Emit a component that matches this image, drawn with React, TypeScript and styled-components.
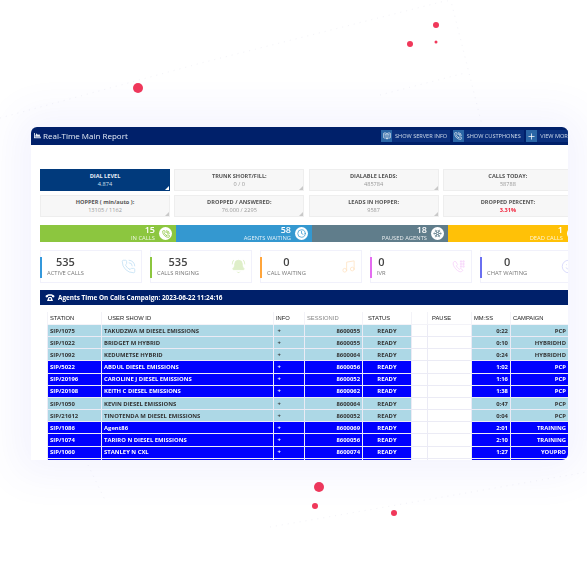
import styled, { createGlobalStyle } from "styled-components";
import { BookOpenText, Clock, Music, PhoneCall, Plus, PhoneOff, Smile, Snowflake, BellRing } from "lucide-react";
import { FaChartArea } from "react-icons/fa";
import { ReactNode } from "react";

const Global = createGlobalStyle`
  html, body { margin: 0; background: #fff; }
  body { font-family: "Open Sans", "Liberation Sans", sans-serif; }
`;

const Page = styled.div`
  position: relative;
  width: 587px;
  height: 565px;
  box-sizing: border-box;
  padding: 127px 19px 0 31px;
  overflow: hidden;
  background: #fff;
`;

const Backdrop = styled.svg`
  position: absolute;
  left: 0;
  top: 0;
`;

const Card = styled.div`
  position: relative;
  height: 333px;
  background: #fff;
  border-radius: 6px 6px 6px 0;
  overflow: hidden;
  box-shadow: 0 0 40px 14px rgba(90, 90, 235, 0.07);
  filter: blur(0.3px);
`;

const Header = styled.div`
  height: 18px;
  box-sizing: border-box;
  background: #00206a;
  color: #e4ecf6;
  display: flex;
  align-items: center;
  padding: 0 0 1px 3px;
  font-size: 8px;
  gap: 2px;
`;

const HeaderLogo = styled(FaChartArea)`
  flex-shrink: 0;
`;

const HeaderTitle = styled.div`
  width: 336px;
  white-space: nowrap;
  flex-shrink: 0;
`;

const HeaderActions = styled.div`
  display: flex;
  gap: 2.5px;
  flex-shrink: 0;
  margin-top: 1px;
`;

const HeadBtn = styled.div`
  height: 12px;
  display: flex;
  align-items: center;
  gap: 3px;
  padding-right: 3px;
  background: #0a2f7c;
  color: #cfdbea;
  font-size: 5.6px;
  white-space: nowrap;
`;

const HeadIcon = styled.span`
  width: 11px;
  height: 12px;
  background: #2b66a6;
  color: #fff;
  display: flex;
  align-items: center;
  justify-content: center;
`;

const Body = styled.div`
  width: 560px;
  padding: 24px 0 0 9px;
`;

const StatGrid = styled.div`
  display: grid;
  grid-template-columns: repeat(4, 130px);
  column-gap: 4.3px;
  row-gap: 4px;
`;

const Stat = styled.div<{ $active?: boolean }>`
  position: relative;
  height: 22px;
  box-sizing: border-box;
  border: 1px solid ${(p) => (p.$active ? "#013a7c" : "#eeeeee")};
  background: ${(p) => (p.$active ? "#013a7c" : "#f7f7f7")};
  display: flex;
  flex-direction: column;
  align-items: center;
  justify-content: center;
  text-align: center;
  &::after {
    content: "";
    position: absolute;
    right: 0;
    bottom: 0;
    border-style: solid;
    border-width: 0 0 4px 4px;
    border-color: transparent transparent ${(p) => (p.$active ? "#fff" : "#c9c9c9")} transparent;
  }
`;

const StatLabel = styled.div<{ $active?: boolean }>`
  font-size: 5.6px;
  line-height: 8px;
  font-weight: 700;
  color: ${(p) => (p.$active ? "#e8eef6" : "#555")};
`;

const StatValue = styled.div<{ $active?: boolean; $alert?: boolean }>`
  font-size: 5.6px;
  line-height: 8px;
  font-weight: ${(p) => (p.$alert ? 700 : 400)};
  color: ${(p) => (p.$active ? "#d5e0ee" : p.$alert ? "#f2243c" : "#999")};
`;

const Bars = styled.div`
  display: flex;
  margin-top: 8px;
  height: 17px;
`;

const Bar = styled.div<{ $bg: string; $width: number }>`
  width: ${(p) => p.$width}px;
  flex-shrink: 0;
  background: ${(p) => p.$bg};
  color: #fff;
  display: flex;
  align-items: center;
  justify-content: flex-end;
  gap: 4px;
  padding-right: 4px;
  box-sizing: border-box;
`;

const BarText = styled.div`
  text-align: right;
`;

const BarNum = styled.div`
  font-size: 9px;
  line-height: 10px;
  font-weight: 600;
`;

const BarLabel = styled.div`
  font-size: 5.8px;
  line-height: 7px;
  opacity: 0.85;
`;

const BarIcon = styled.span<{ $color: string }>`
  width: 13px;
  height: 13px;
  border-radius: 50%;
  background: #fff;
  color: ${(p) => p.$color};
  display: flex;
  align-items: center;
  justify-content: center;
  flex-shrink: 0;
`;

const Tiles = styled.div`
  display: flex;
  gap: 8px;
  margin-top: 8px;
`;

const Tile = styled.div`
  position: relative;
  width: 102px;
  height: 33px;
  box-sizing: border-box;
  flex-shrink: 0;
  border: 1px solid #f1f1fb;
  display: flex;
  align-items: center;
  justify-content: space-between;
  padding: 0 5px 0 6px;
`;

const Accent = styled.span<{ $color: string }>`
  position: absolute;
  left: -1px;
  top: 6px;
  width: 2px;
  height: 21px;
  background: ${(p) => p.$color};
`;

const TileText = styled.div`
  text-align: center;
`;

const TileNum = styled.div`
  font-size: 11px;
  line-height: 14px;
  font-weight: 600;
  color: #444;
`;

const TileLabel = styled.div`
  font-size: 5.8px;
  line-height: 9px;
  color: #777;
  white-space: nowrap;
`;

const TileIcon = styled.span<{ $color: string }>`
  color: ${(p) => p.$color};
  display: flex;
  opacity: 0.28;
`;

const TitleBar = styled.div`
  margin-top: 7px;
  height: 15px;
  background: #00206a;
  color: #fff;
  display: flex;
  align-items: center;
  gap: 3px;
  padding-left: 5px;
  font-size: 6.4px;
  font-weight: 700;
  white-space: nowrap;
`;

const TableWrap = styled.div`
  margin: 7px 0 0 7px;
`;

const Table = styled.table`
  width: 521px;
  table-layout: fixed;
  border-collapse: collapse;
`;

const Th = styled.th<{ $muted?: boolean; $pad?: number }>`
  height: 12px;
  padding: 0 0 0 ${(p) => p.$pad ?? 2}px;
  border: 1px solid #f3f3f8;
  border-top: 0;
  font-family: "Liberation Sans", Arial, sans-serif;
  font-size: 5.8px;
  font-weight: 400;
  text-align: left;
  color: ${(p) => (p.$muted ? "#888" : "#222")};
  white-space: nowrap;
`;

const Tr = styled.tr<{ $hot?: boolean }>`
  height: 12.17px;
  background: ${(p) => (p.$hot ? "#0000ff" : "#add8e6")};
  color: ${(p) => (p.$hot ? "#fff" : "#333")};
`;

const Td = styled.td<{ $align?: string; $blank?: boolean }>`
  padding: 0 2px;
  border: 1px solid #ebebf5;
  font-size: 5.9px;
  line-height: 10px;
  font-weight: 700;
  white-space: nowrap;
  overflow: hidden;
  text-align: ${(p) => p.$align ?? "left"};
  background: ${(p) => (p.$blank ? "#fff" : "transparent")};
`;

const DialPhone = () => (
  <svg width="15" height="15" viewBox="0 0 24 24" fill="none" stroke="currentColor" strokeWidth="1.4">
    <path d="M5 4c-1.500 1-2 3-1 6 1.500 4 5 8 9 10 3 1 5 0 6-2l-3.500-3-2 1.500c-2-1-4-3.500-5-5.500l2-2L7.500 4z" />
    <path d="M15 3h2v2h-2zM19 3h2v2h-2zM15 7h2v2h-2zM19 7h2v2h-2zM15 11h2v2h-2zM19 11h2v2h-2z" />
  </svg>
);

const DeskPhone = () => (
  <svg width="10" height="9" viewBox="0 0 20 18" fill="#fff">
    <path d="M1 6C4 1 16 1 19 6l-1 3-4-1V6C12 5 8 5 6 6v2L2 9z" />
    <path d="M7 8h6l3 8H4z" />
    <circle cx="10" cy="12" r="1.800" fill="#00206a" />
  </svg>
);

const stats = [
  { label: "DIAL LEVEL", value: "4.874", active: true },
  { label: "TRUNK SHORT/FILL:", value: "0 / 0" },
  { label: "DIALABLE LEADS:", value: "485784" },
  { label: "CALLS TODAY:", value: "58788" },
  { label: "HOPPER ( min/auto ):", value: "13105 / 1162" },
  { label: "DROPPED / ANSWERED:", value: "76.000 / 2295" },
  { label: "LEADS IN HOPPER:", value: "9587" },
  { label: "DROPPED PERCENT:", value: "3.31%", alert: true },
];

const bars: { num: string; label: string; bg: string; width: number; icon: ReactNode; color: string }[] = [
  { num: "15", label: "IN CALLS", bg: "#8cc63f", width: 136, color: "#8cc63f", icon: <PhoneCall size={8} strokeWidth={2.4} /> },
  { num: "58", label: "AGENTS WAITING", bg: "#3498d0", width: 136, color: "#3498d0", icon: <Clock size={9} strokeWidth={2} /> },
  { num: "18", label: "PAUSED AGENTS", bg: "#607d8b", width: 136, color: "#607d8b", icon: <Snowflake size={9} strokeWidth={2} /> },
  { num: "1", label: "DEAD CALLS", bg: "#ffc107", width: 136, color: "#ffc107", icon: <PhoneOff size={8} strokeWidth={2} /> },
];

const tiles: { num: string; label: string; color: string; icon: ReactNode }[] = [
  { num: "535", label: "ACTIVE CALLS", color: "#3498db", icon: <PhoneCall size={15} strokeWidth={1.4} /> },
  { num: "535", label: "CALLS RINGING", color: "#8cc63f", icon: <BellRing size={15} strokeWidth={1.4} fill="currentColor" /> },
  { num: "0", label: "CALL WAITING", color: "#ffa53b", icon: <Music size={15} strokeWidth={1.4} /> },
  { num: "0", label: "IVR", color: "#e46cf0", icon: <DialPhone /> },
  { num: "0", label: "CHAT WAITING", color: "#6a6ff0", icon: <Smile size={15} strokeWidth={1.4} /> },
];

const rows = [
  ["SIP/1075", "TAKUDZWA M DIESEL EMISSIONS", "8600055", "0:22", "PCP", false],
  ["SIP/1022", "BRIDGET M HYBRID", "8600055", "0:10", "HYBRIDHD", false],
  ["SIP/1092", "KEDUMETSE HYBRID", "8600064", "0:24", "HYBRIDHD", false],
  ["SIP/5022", "ABDUL DIESEL EMISSIONS", "8600056", "1:02", "PCP", true],
  ["SIP/20196", "CAROLINE J DIESEL EMISSIONS", "8600052", "1:16", "PCP", true],
  ["SIP/20108", "KEITH C DIESEL EMISSIONS", "8600062", "1:38", "PCP", true],
  ["SIP/1050", "KEVIN DIESEL EMISSIONS", "8600064", "0:47", "PCP", false],
  ["SIP/21612", "TINOTENDA M DIESEL EMISSIONS", "8600052", "0:04", "PCP", false],
  ["SIP/1086", "Agent86", "8600069", "2:01", "TRAINING", true],
  ["SIP/1074", "TARIRO N DIESEL EMISSIONS", "8600056", "2:10", "TRAINING", true],
  ["SIP/1060", "STANLEY N CXL", "8600074", "1:27", "YOUPRO", true],
] as const;

const columns = [54, 172, 31, 58, 49, 16, 44, 39, 58];

function App() {
  return (
    <>
      <Global />
      <Page>
        <Backdrop width="587" height="565" viewBox="0 0 587 565" fill="none">
          <g stroke="#f3f3f8" strokeWidth="1" strokeDasharray="1 5">
            <path d="M0 118L205 62L445 1Q450 0 452 5L482 125" />
            <path d="M380 95L465 73" />
            <path d="M270 527L587 472" />
            <path d="M88 465L105 500" />
          </g>
          <circle cx="138" cy="88" r="5" fill="#f0385a" />
          <circle cx="436" cy="25" r="3" fill="#f0385a" />
          <circle cx="410" cy="44" r="3" fill="#f0385a" />
          <circle cx="436" cy="42" r="1.500" fill="#f0385a" />
          <circle cx="319" cy="487" r="5" fill="#f0385a" />
          <circle cx="315" cy="506" r="3" fill="#f0385a" />
          <circle cx="394" cy="513" r="3" fill="#f0385a" />
        </Backdrop>
        <Card>
          <Header>
            <HeaderLogo size={7} />
            <HeaderTitle>Real-Time Main Report</HeaderTitle>
            <HeaderActions>
              <HeadBtn><HeadIcon><BookOpenText size={8} /></HeadIcon>SHOW SERVER INFO</HeadBtn>
              <HeadBtn><HeadIcon><PhoneCall size={8} /></HeadIcon>SHOW CUSTPHONES</HeadBtn>
              <HeadBtn><HeadIcon><Plus size={9} /></HeadIcon>VIEW MORE</HeadBtn>
            </HeaderActions>
          </Header>
          <Body>
            <StatGrid>
              {stats.map((s) => (
                <Stat key={s.label} $active={s.active}>
                  <StatLabel $active={s.active}>{s.label}</StatLabel>
                  <StatValue $active={s.active} $alert={s.alert}>{s.value}</StatValue>
                </Stat>
              ))}
            </StatGrid>
            <Bars>
              {bars.map((b) => (
                <Bar key={b.label} $bg={b.bg} $width={b.width}>
                  <BarText>
                    <BarNum>{b.num}</BarNum>
                    <BarLabel>{b.label}</BarLabel>
                  </BarText>
                  <BarIcon $color={b.color}>{b.icon}</BarIcon>
                </Bar>
              ))}
            </Bars>
            <Tiles>
              {tiles.map((t) => (
                <Tile key={t.label}>
                  <Accent $color={t.color} />
                  <TileText>
                    <TileNum>{t.num}</TileNum>
                    <TileLabel>{t.label}</TileLabel>
                  </TileText>
                  <TileIcon $color={t.color}>{t.icon}</TileIcon>
                </Tile>
              ))}
            </Tiles>
            <TitleBar>
              <DeskPhone />
              Agents Time On Calls Campaign: 2023-06-22 11:24:16
            </TitleBar>
            <TableWrap>
              <Table>
                <colgroup>
                  {columns.map((w, i) => (
                    <col key={i} style={{ width: w }} />
                  ))}
                </colgroup>
                <thead>
                  <tr>
                    <Th>STATION</Th>
                    <Th $pad={6}>USER SHOW ID</Th>
                    <Th>INFO</Th>
                    <Th $muted>SESSIONID</Th>
                    <Th $pad={5}>STATUS</Th>
                    <Th />
                    <Th $pad={4}>PAUSE</Th>
                    <Th>MM:SS</Th>
                    <Th>CAMPAIGN</Th>
                  </tr>
                </thead>
                <tbody>
                  {rows.map((r) => (
                    <Tr key={r[0]} $hot={r[5]}>
                      <Td>{r[0]}</Td>
                      <Td>{r[1]}</Td>
                      <Td $align="left">&nbsp;+</Td>
                      <Td $align="right">{r[2]}</Td>
                      <Td $align="center">READY</Td>
                      <Td $blank />
                      <Td $blank />
                      <Td $align="right">{r[3]}</Td>
                      <Td $align="right">{r[4]}</Td>
                    </Tr>
                  ))}
                  <Tr $hot>
                    <Td />
                    <Td />
                    <Td />
                    <Td />
                    <Td />
                    <Td $blank />
                    <Td $blank />
                    <Td />
                    <Td />
                  </Tr>
                </tbody>
              </Table>
            </TableWrap>
          </Body>
        </Card>
      </Page>
    </>
  );
}

export default App;
